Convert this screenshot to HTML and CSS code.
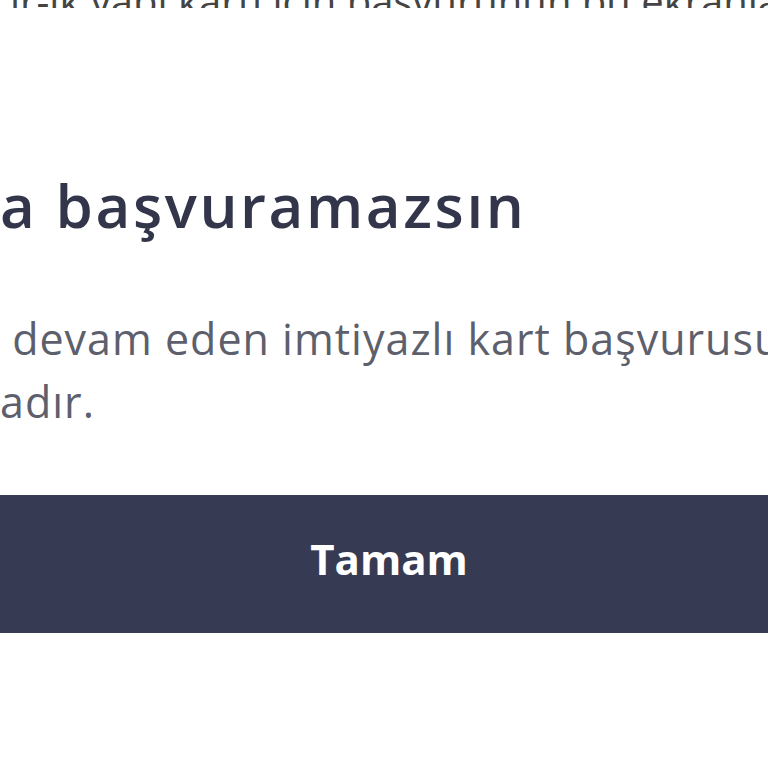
FILE: index.html
```html
<!DOCTYPE html>
<html lang="tr">
<head>
<meta charset="utf-8">
<link rel="stylesheet" href="styles.css">
</head>
<body>
<div class="modal">
  <div class="cut">ır-ık yapı kartı için başvurunun bu ekranla karta</div>
  <h1 class="title">a başvuramazsın</h1>
  <p class="text">&nbsp;devam eden imtiyazlı kart başvurusu<br>adır.</p>
  <button class="btn">Tamam</button>
</div>
</body>
</html>
```
FILE: styles.css
```css
html, body {
  margin: 0;
  padding: 0;
  background: #ffffff;
  overflow: hidden;
  width: 768px;
  height: 768px;
}
.modal {
  font-family: "Open Sans", "Noto Sans", sans-serif;
  display: flex;
  flex-direction: column;
  white-space: nowrap;
}
.cut {
  height: 8px;
  overflow: hidden;
  font-size: 40px;
  line-height: 14px;
  color: #444;
  padding-left: 10px;
  display: flex;
  align-items: flex-end;
}
.title {
  margin: 157px 0 0 0;
  font-size: 60px;
  line-height: 80px;
  font-weight: 600;
  letter-spacing: 2.6px;
  color: #33364b;
}
.text {
  margin: 62px 0 0 0;
  font-size: 43px;
  line-height: 63px;
  letter-spacing: 1px;
  color: #5d5f6c;
}
.btn {
  margin-top: 62px;
  height: 138px;
  width: 100%;
  border: none;
  background: #363a52;
  color: #ffffff;
  font-family: "Open Sans", "Noto Sans", sans-serif;
  font-weight: 700;
  font-size: 42px;
  padding: 0 0 12px 10px;
}
```
